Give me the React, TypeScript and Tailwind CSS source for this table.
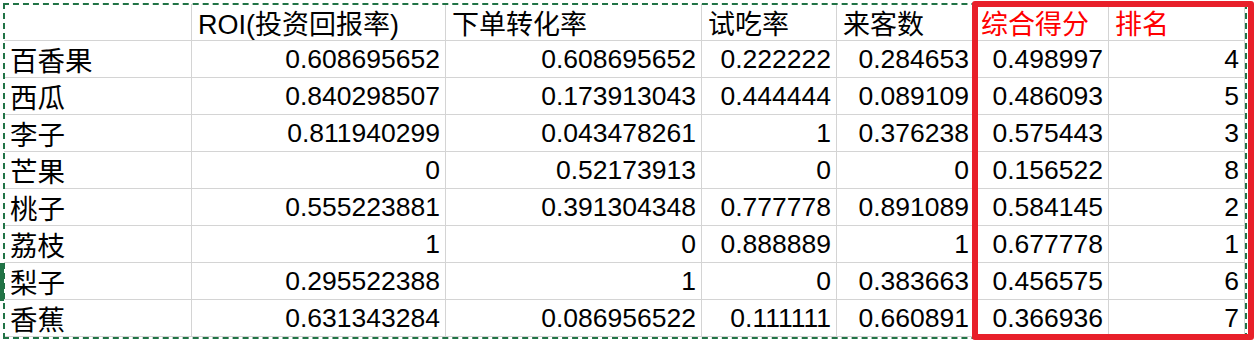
const header = ["", "ROI(投资回报率)", "下单转化率", "试吃率", "来客数", "综合得分", "排名"];

const rows: string[][] = [
  ["百香果", "0.608695652", "0.608695652", "0.222222", "0.284653", "0.498997", "4"],
  ["西瓜", "0.840298507", "0.173913043", "0.444444", "0.089109", "0.486093", "5"],
  ["李子", "0.811940299", "0.043478261", "1", "0.376238", "0.575443", "3"],
  ["芒果", "0", "0.52173913", "0", "0", "0.156522", "8"],
  ["桃子", "0.555223881", "0.391304348", "0.777778", "0.891089", "0.584145", "2"],
  ["荔枝", "1", "0", "0.888889", "1", "0.677778", "1"],
  ["梨子", "0.295522388", "1", "0", "0.383663", "0.456575", "6"],
  ["香蕉", "0.631343284", "0.086956522", "0.111111", "0.660891", "0.366936", "7"],
];

const font = "font-['Liberation_Sans','Noto_Sans_CJK_SC',sans-serif]";

export default function App() {
  return (
    <div className={`relative h-[342px] w-[1260px] overflow-hidden bg-white text-black ${font}`}>
      <div className="ml-[4px] mt-[4px] grid w-max grid-cols-[188px_254px_256px_135px_138px_134px_136px]">
        {header.map((h, i) => (
          <div
            key={i}
            className={`flex h-[37px] items-end border-b border-r border-[#d4d4d4] pl-[6px] text-[27px] leading-none ${
              i >= 5 ? "text-[#ff0000]" : ""
            }`}
          >
            <span className="pb-[1px]">{h}</span>
          </div>
        ))}
        {rows.map((r, ri) =>
          r.map((c, ci) => (
            <div
              key={`${ri}-${ci}`}
              className={`flex h-[37px] items-end border-b border-r border-[#d4d4d4] leading-none ${
                ci === 0 ? "pl-[6px] text-[27.5px]" : "justify-end pr-[5px] text-[26.5px]"
              }`}
            >
              <span className={ci === 0 ? "pb-[2px]" : "pb-[5px]"}>{c}</span>
            </div>
          ))
        )}
      </div>

      {/* copy selection marquee */}
      <div className="pointer-events-none absolute left-[3px] top-[3px] h-[336px] w-[1244px] border-2 border-dashed border-[#217346]" />
      <div className="absolute left-0 top-[263px] h-[38px] w-[4px] bg-[#217346]" />

      {/* red highlight box */}
      <div className="pointer-events-none absolute left-[972px] top-[1px] h-[339px] w-[282px] rounded-[3px] border-[6px] border-[#e8202a]" />
    </div>
  );
}
